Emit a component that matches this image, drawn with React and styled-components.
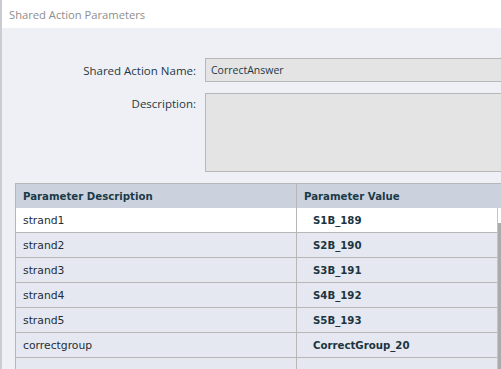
import React from 'react'
import styled, { createGlobalStyle } from 'styled-components'

const GlobalStyle = createGlobalStyle`
  html, body {
    margin: 0;
    padding: 0;
    width: 501px;
    height: 369px;
    overflow: hidden;
    background: #eff0f5;
  }
`

const Window = styled.div`
  display: flex;
  flex-direction: column;
  width: 501px;
  height: 369px;
  overflow: hidden;
  border-left: 2px solid #c9ccd2;
  box-sizing: border-box;
  background: #eff0f5;
  font-family: "Open Sans", "Noto Sans", sans-serif;
`

const TitleBar = styled.div`
  height: 28px;
  flex: none;
  background: #ffffff;
  display: flex;
  align-items: center;
  padding-left: 7px;
  font-size: 11.2px;
  color: #8e8e8e;
`

const Body = styled.div`
  flex: 1;
  display: flex;
  flex-direction: column;
  padding-top: 30px;
  gap: 11px;
  overflow: hidden;
`

const Field = styled.div`
  display: grid;
  grid-template-columns: 194px 320px;
  column-gap: 9px;
  align-items: ${p => (p.$top ? 'start' : 'center')};
`

const Label = styled.label`
  text-align: right;
  font-size: 11.5px;
  color: #1d3944;
  padding-top: ${p => (p.$top ? '3px' : '0')};
`

const Input = styled.div`
  height: 24px;
  box-sizing: border-box;
  background: #e4e4e4;
  border: 1px solid #b7b7b7;
  display: flex;
  align-items: center;
  padding-left: 5px;
  font-size: 10.5px;
  color: #1d3944;
`

const TextArea = styled.div`
  height: 79px;
  box-sizing: border-box;
  background: #e4e4e4;
  border: 1px solid #b7b7b7;
`

const Table = styled.div`
  margin-left: 13px;
  border-top: 1px solid #b7b7b7;
  border-left: 1px solid #b7b7b7;
  font-family: "DejaVu Sans", Verdana, sans-serif;
  font-size: 10.8px;
  color: #1e2e36;
`

const HeaderRow = styled.div`
  display: grid;
  grid-template-columns: 280px 1fr;
  height: 24px;
  background: #cbd2de;
`

const HeaderCell = styled.div`
  display: flex;
  align-items: center;
  padding-left: 7px;
  font-size: 10.2px;
  font-weight: bold;
  color: #1b3a48;
  & + & {
    border-left: 1px solid #b7b7b7;
  }
`

const Rows = styled.div`
  display: grid;
  grid-template-columns: 1fr 4px;
`

const RowList = styled.div`
  display: flex;
  flex-direction: column;
`

const Row = styled.div`
  display: grid;
  grid-template-columns: 280px 1fr;
  height: 25px;
  box-sizing: border-box;
  border-bottom: 1px solid #b7b7b7;
  background: ${p => (p.$selected ? '#ffffff' : '#e5e8f0')};
`

const Cell = styled.div`
  display: flex;
  align-items: center;
  padding-left: ${p => (p.$value ? '16px' : '7px')};
  font-size: ${p => (p.$value ? '10.2px' : '10.8px')};
  font-weight: ${p => (p.$value ? 'bold' : 'normal')};
  color: ${p => (p.$value ? '#1b3440' : '#1e2e36')};
  border-left: ${p => (p.$value ? '1px solid #b7b7b7' : 'none')};
  white-space: nowrap;
`

const Scrollbar = styled.div`
  display: flex;
  flex-direction: column;
  border-left: 1px solid #c4c4c4;
  background: #ffffff;
`

const Thumb = styled.div`
  margin-top: 15px;
  flex: 1;
  background: #ababab;
`

const params = [
  ['strand1', 'S1B_189'],
  ['strand2', 'S2B_190'],
  ['strand3', 'S3B_191'],
  ['strand4', 'S4B_192'],
  ['strand5', 'S5B_193'],
  ['correctgroup', 'CorrectGroup_20'],
  ['', ''],
]

export default function App() {
  return (
    <>
      <GlobalStyle />
      <Window>
        <TitleBar>Shared Action Parameters</TitleBar>
        <Body>
          <Field>
            <Label>Shared Action Name:</Label>
            <Input>CorrectAnswer</Input>
          </Field>
          <Field $top>
            <Label $top>Description:</Label>
            <TextArea />
          </Field>
          <Table>
            <HeaderRow>
              <HeaderCell>Parameter Description</HeaderCell>
              <HeaderCell>Parameter Value</HeaderCell>
            </HeaderRow>
            <Rows>
              <RowList>
                {params.map(([desc, val], i) => (
                  <Row key={i} $selected={i === 0}>
                    <Cell>{desc}</Cell>
                    <Cell $value>{val}</Cell>
                  </Row>
                ))}
              </RowList>
              <Scrollbar>
                <Thumb />
              </Scrollbar>
            </Rows>
          </Table>
        </Body>
      </Window>
    </>
  )
}
